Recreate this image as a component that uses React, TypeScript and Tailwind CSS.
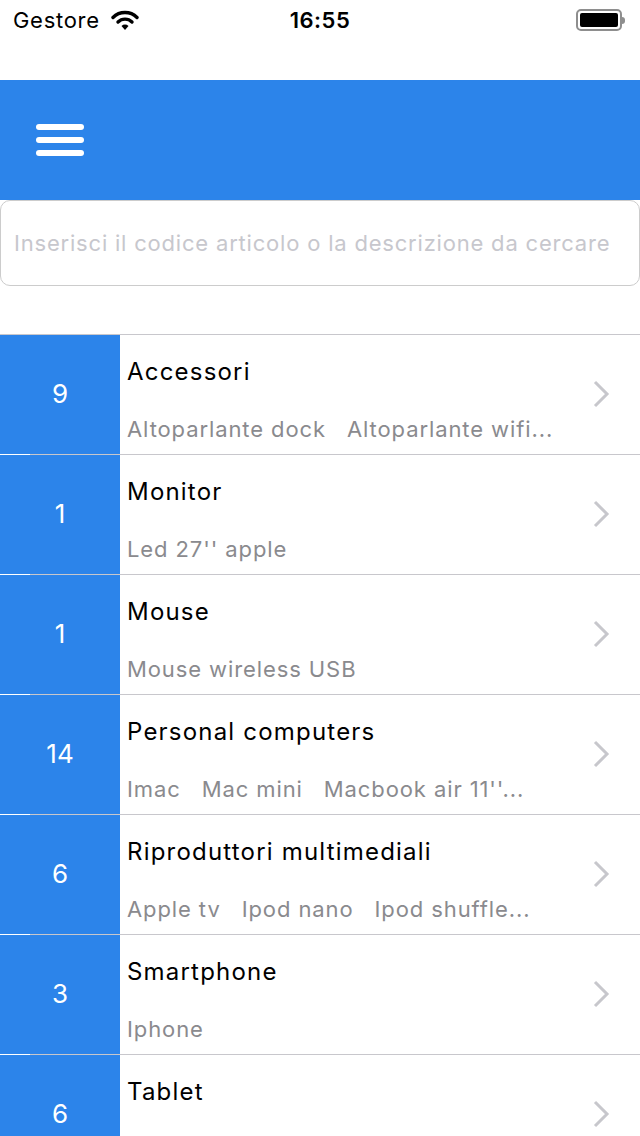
import React from 'react';

const categories = [
  { count: 9, title: 'Accessori', items: ['Altoparlante dock', 'Altoparlante wifi...'] },
  { count: 1, title: 'Monitor', items: ["Led 27'' apple"] },
  { count: 1, title: 'Mouse', items: ['Mouse wireless USB'] },
  { count: 14, title: 'Personal computers', items: ['Imac', 'Mac mini', "Macbook air 11''..."] },
  { count: 6, title: 'Riproduttori multimediali', items: ['Apple tv', 'Ipod nano', 'Ipod shuffle...'] },
  { count: 3, title: 'Smartphone', items: ['Iphone'] },
  { count: 6, title: 'Tablet', items: [] as string[] },
];

function Wifi() {
  return (
    <svg width="28" height="22" viewBox="0 0 28 22">
      <path d="M2 8.5 A17 17 0 0 1 26 8.5" fill="none" stroke="#000" strokeWidth="3.4" strokeLinecap="round" />
      <path d="M7 13 A10 10 0 0 1 21 13" fill="none" stroke="#000" strokeWidth="3.4" strokeLinecap="round" />
      <path d="M10.5 17 L14 21 L17.5 17 A5 5 0 0 0 10.5 17 Z" fill="#000" />
    </svg>
  );
}

function Battery() {
  return (
    <div className="flex items-center">
      <div className="w-[46px] h-[22px] rounded-[5px] border-2 border-[#8e8e8e] p-[2px]">
        <div className="w-full h-full rounded-[2px] bg-black" />
      </div>
      <div className="w-[3px] h-[7px] rounded-r-sm bg-[#8e8e8e]" />
    </div>
  );
}

function Chevron() {
  return (
    <svg width="18" height="28" viewBox="0 0 18 28">
      <path d="M3 2 L15 14 L3 26" fill="none" stroke="#c7c7cc" strokeWidth="3" />
    </svg>
  );
}

export default function App() {
  return (
    <div className="w-[640px] h-[1136px] overflow-hidden bg-white font-['Inter','Noto_Sans',sans-serif]">
      {/* Status bar */}
      <div className="h-[40px] flex items-center justify-between px-[13px] relative">
        <div className="flex items-center gap-[11px]">
          <span className="text-[22px] text-black tracking-[0.7px]">Gestore</span>
          <Wifi />
        </div>
        <span className="absolute left-1/2 -translate-x-1/2 text-[22px] font-semibold text-black tracking-[0.5px]">
          16:55
        </span>
        <div className="pr-[2px]">
          <Battery />
        </div>
      </div>
      <div className="h-[40px]" />

      {/* Header */}
      <div className="h-[120px] bg-[#2c84ea] flex items-center px-[36px]">
        <div className="flex flex-col gap-[7px] -mt-[1px]">
          <div className="w-[48px] h-[6px] rounded-full bg-white" />
          <div className="w-[48px] h-[6px] rounded-full bg-white" />
          <div className="w-[48px] h-[6px] rounded-full bg-white" />
        </div>
      </div>

      {/* Search */}
      <div className="h-[86px] border border-[#cccccc] rounded-[10px] flex items-center px-[13px]">
        <span className="text-[22px] text-[#c7c7cd] whitespace-nowrap tracking-[0.8px]">
          Inserisci il codice articolo o la descrizione da cercare
        </span>
      </div>
      <div className="h-[48px]" />

      {/* List */}
      <div className="border-t border-[#c8c7cc]">
        {categories.map((c) => (
          <div key={c.title} className="relative h-[120px] flex">
            <div className="w-[120px] h-[119px] bg-[#2c84ea] flex items-center justify-center shrink-0">
              <span className="text-[26px] text-white -mt-[2px]">{c.count}</span>
            </div>
            <div className="flex-1 flex flex-col pl-[7px] pt-[20px]">
              <span className="text-[24px] text-black leading-[34px] tracking-[1.2px]">{c.title}</span>
              <div className="flex gap-[21px] mt-[25px] text-[22px] text-[#8a8a8e] leading-[30px] whitespace-nowrap tracking-[0.9px]">
                {c.items.map((it) => (
                  <span key={it}>{it}</span>
                ))}
              </div>
            </div>
            <div className="w-[48px] flex items-center justify-start -mt-[2px]">
              <Chevron />
            </div>
            <div className="absolute left-[30px] right-0 bottom-0 h-px bg-[#c8c7cc]" />
          </div>
        ))}
      </div>
    </div>
  );
}
